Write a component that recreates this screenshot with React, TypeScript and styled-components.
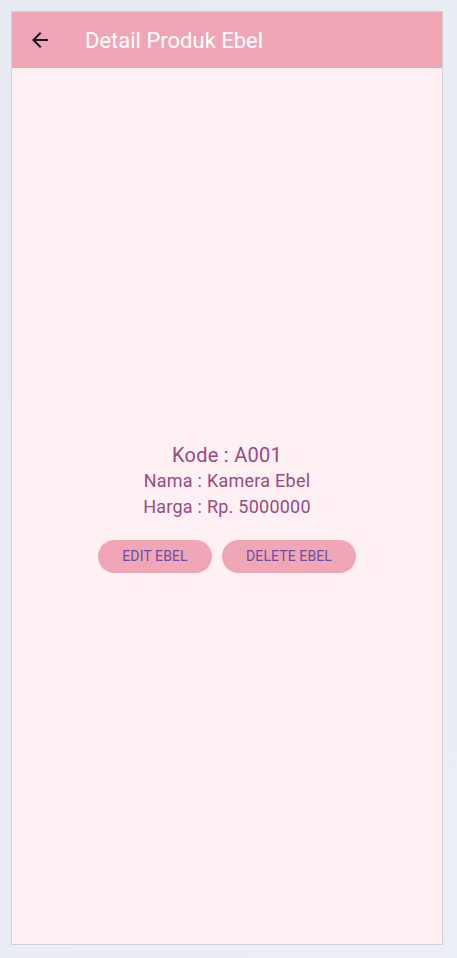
import React from "react";
import styled, { createGlobalStyle } from "styled-components";

const Global = createGlobalStyle`
  html, body { margin: 0; padding: 0; }
  body {
    background: #e8edf5;
    font-family: Roboto, "Noto Sans", sans-serif;
  }
`;

const Page = styled.div`
  width: 457px;
  height: 958px;
  box-sizing: border-box;
  padding: 11px 14px 13px 11px;
  background: linear-gradient(135deg, #e6ebf4, #eaeef6);
  display: flex;
`;

const Frame = styled.div`
  flex: 1;
  border: 1px solid #cfd0d4;
  background: #fff0f4;
  display: flex;
  flex-direction: column;
`;

const AppBar = styled.header`
  height: 56px;
  background: #f0a6b4;
  display: flex;
  align-items: center;
  padding-left: 16px;
  gap: 33px;
`;

const BackButton = styled.button`
  width: 24px;
  height: 24px;
  padding: 0;
  border: none;
  background: none;
  display: flex;
  align-items: center;
  justify-content: center;
  color: #1d1b20;
`;

const Title = styled.h1`
  margin: 0;
  font-size: 22px;
  font-weight: 400;
  color: #ffffff;
  letter-spacing: 0;
`;

const Body = styled.main`
  flex: 1;
  display: flex;
  flex-direction: column;
  align-items: center;
  justify-content: center;
  padding-top: 2px;
`;

const Line = styled.div<{ $size: number }>`
  font-size: ${(p) => p.$size}px;
  line-height: 26px;
  letter-spacing: 0.25px;
  color: #9a4a80;
`;

const Actions = styled.div`
  display: flex;
  gap: 10px;
  margin-top: 20px;
`;

const Pill = styled.button<{ $w: number }>`
  width: ${(p) => p.$w}px;
  height: 33px;
  border: none;
  border-radius: 17px;
  background: #f0a6b4;
  color: #6a4ea6;
  font-family: Roboto, "Noto Sans", sans-serif;
  font-size: 14px;
  letter-spacing: 0.1px;
  padding: 0;
`;

export default function App() {
  return (
    <>
      <Global />
      <Page>
        <Frame>
          <AppBar>
            <BackButton aria-label="back">
              <svg width="24" height="24" viewBox="0 0 24 24">
                <path
                  d="M20 11H7.83l5.59-5.59L12 4l-8 8 8 8 1.41-1.41L7.83 13H20v-2z"
                  fill="currentColor"
                />
              </svg>
            </BackButton>
            <Title>Detail Produk Ebel</Title>
          </AppBar>
          <Body>
            <Line $size={20}>Kode : A001</Line>
            <Line $size={18}>Nama : Kamera Ebel</Line>
            <Line $size={18}>Harga : Rp. 5000000</Line>
            <Actions>
              <Pill $w={114}>EDIT EBEL</Pill>
              <Pill $w={134}>DELETE EBEL</Pill>
            </Actions>
          </Body>
        </Frame>
      </Page>
    </>
  );
}
